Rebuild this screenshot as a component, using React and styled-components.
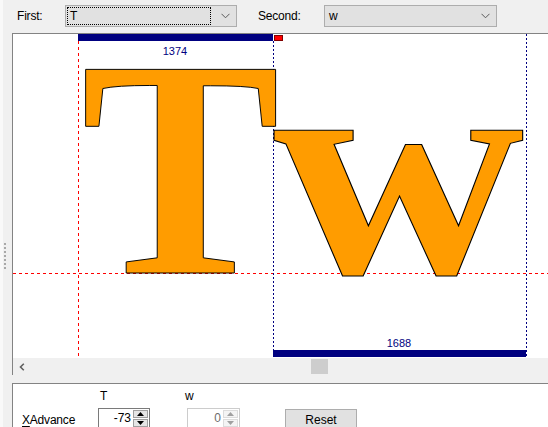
import React from 'react'
import styled, { createGlobalStyle } from 'styled-components'

const GlobalStyle = createGlobalStyle`
  html, body {
    margin: 0;
    padding: 0;
    background: #f0f0f0;
    font-family: "Liberation Sans", Arial, sans-serif;
    font-size: 12px;
    color: #000;
  }
`

const Window = styled.div`
  display: flex;
  width: 548px;
  height: 427px;
  overflow: hidden;
  background: #f0f0f0;
`

const Splitter = styled.div`
  width: 12px;
  flex-shrink: 0;
  box-sizing: border-box;
  border-left: 3px solid #f9f9f9;
  padding-top: 243px;
`

const Grip = styled.div`
  width: 2px;
  height: 27px;
  margin-left: 1px;
  background: repeating-linear-gradient(to bottom, #a8a8a8 0 2px, transparent 2px 4px);
`

const Main = styled.div`
  flex: 1;
  display: flex;
  flex-direction: column;
  min-width: 0;
`

const Toolbar = styled.div`
  height: 33px;
  flex-shrink: 0;
  display: flex;
  align-items: center;
  padding-left: 5px;
  padding-bottom: 1px;
  box-sizing: border-box;
`

const Label = styled.span`
  width: ${p => p.$w}px;
  margin-left: ${p => p.$ml || 0}px;
  letter-spacing: -0.2px;
`

const ComboBox = styled.div`
  display: flex;
  align-items: center;
  width: ${p => p.$w}px;
  height: 22px;
  box-sizing: border-box;
  border: 1px solid #adadad;
  background: #e1e1e1;
  padding: 0 6px 0 1px;
`

const ComboText = styled.div`
  flex: 1;
  height: 18px;
  line-height: 16px;
  box-sizing: border-box;
  border: 1px dotted ${p => (p.$focused ? '#000' : 'transparent')};
  padding-left: 2px;
  margin-right: 10px;
`

const CanvasFrame = styled.div`
  height: 342px;
  flex-shrink: 0;
  display: flex;
  flex-direction: column;
  box-sizing: border-box;
  border-top: 1px solid #838383;
  border-left: 1px solid #838383;
`

const Drawing = styled.div`
  height: 324px;
  flex-shrink: 0;
  background: #fff;
  overflow: hidden;
  svg {
    display: block;
  }
`

const HScroll = styled.div`
  height: 17px;
  flex-shrink: 0;
  display: flex;
  align-items: center;
  background: #f0f0f0;
`

const ScrollArrow = styled.div`
  width: 17px;
  height: 17px;
  display: flex;
  align-items: center;
  justify-content: center;
`

const Thumb = styled.div`
  width: 17px;
  height: 15px;
  margin-left: 281px;
  background: #cdcdcd;
`

const BottomPanel = styled.div`
  margin-top: 8px;
  flex: 1;
  min-height: 0;
  overflow: hidden;
  background: #fff;
  border-top: 1px solid #838383;
  border-left: 1px solid #838383;
  display: grid;
  grid-template-columns: 76px 89px 98px 72px;
  grid-template-rows: 14px 22px;
  row-gap: 5px;
  padding: 5px 0 0 9px;
  align-items: center;
`

const HeadCell = styled.div`
  margin-left: ${p => p.$ml}px;
  line-height: 14px;
`

const RowLabel = styled.div`
  padding-top: 2px;
  letter-spacing: -0.2px;
  u {
    text-decoration-thickness: 1px;
    text-underline-offset: 2px;
  }
`

const SpinBox = styled.div`
  display: flex;
  width: ${p => p.$w}px;
  height: 21px;
  box-sizing: border-box;
  border: 1px solid ${p => (p.$disabled ? '#cccccc' : '#7a7a7a')};
  background: #fff;
  align-self: start;
`

const SpinValue = styled.div`
  flex: 1;
  text-align: right;
  padding-right: 2px;
  line-height: 18px;
  color: ${p => (p.$disabled ? '#6d6d6d' : '#000')};
`

const SpinButtons = styled.div`
  width: 15px;
  display: flex;
  flex-direction: column;
  padding: 1px 1px 1px 0;
  gap: 1px;
`

const SpinButton = styled.div`
  flex: 1;
  border: 1px solid ${p => (p.$disabled ? '#dcdcdc' : '#a0a0a0')};
  background: ${p => (p.$disabled ? '#f4f4f4' : '#e5e5e5')};
  display: flex;
  align-items: center;
  justify-content: center;
`

const ResetButton = styled.div`
  width: 72px;
  height: 22px;
  box-sizing: border-box;
  border: 1px solid #adadad;
  background: #e1e1e1;
  text-align: center;
  line-height: 20px;
  align-self: start;
  margin-top: 1px;
`

const Chevron = () => (
  <svg width="9" height="6" viewBox="0 0 9 6">
    <path d="M0.5 0.8 L4.5 4.8 L8.5 0.8" fill="none" stroke="#5a5a5a" strokeWidth="1" />
  </svg>
)

const Triangle = ({ up, disabled }) => (
  <svg width="7" height="4" viewBox="0 0 7 4">
    <path d={up ? 'M0 4 L3.5 0 L7 4 Z' : 'M0 0 L3.5 4 L7 0 Z'} fill={disabled ? '#a0a0a0' : '#000'} />
  </svg>
)

const Spin = ({ value, disabled, w }) => (
  <SpinBox $disabled={disabled} $w={w}>
    <SpinValue $disabled={disabled}>{value}</SpinValue>
    <SpinButtons>
      <SpinButton $disabled={disabled}>
        <Triangle up disabled={disabled} />
      </SpinButton>
      <SpinButton $disabled={disabled}>
        <Triangle disabled={disabled} />
      </SpinButton>
    </SpinButtons>
  </SpinBox>
)

// kerning view: T origin at 65, w origin at 260, baseline at 239 (canvas coords)
const GLYPH = '#ff9c00'
const NAVY = '#000080'
const SERIF = '"Liberation Serif", "Times New Roman", serif'
const SANS = '"Liberation Sans", Arial, sans-serif'

const KernView = () => (
  <svg width="535" height="324" viewBox="0 0 535 324">
    <line x1="0" y1="239.5" x2="535" y2="239.5" stroke="#ff0000" strokeDasharray="3 3" />
    <line x1="65.5" y1="7" x2="65.5" y2="324" stroke="#ff0000" strokeDasharray="3 3" />
    <line x1="260.5" y1="7" x2="260.5" y2="316" stroke={NAVY} strokeDasharray="2 2" />
    <line x1="513.5" y1="0" x2="513.5" y2="324" stroke={NAVY} strokeDasharray="2 2" />

    <text
      x="68"
      y="239"
      fontFamily={SERIF}
      fontWeight="bold"
      fontSize="311"
      fill={GLYPH}
      stroke="#000"
      strokeWidth="1"
      transform="translate(68 239) scale(0.96 1) translate(-68 -239)"
    >
      T
    </text>
    <text
      x="260"
      y="239"
      fontFamily={SERIF}
      fontWeight="bold"
      fontSize="311"
      fill={GLYPH}
      stroke="#000"
      strokeWidth="1"
      transform="translate(260 239) scale(1.12 1) translate(-260 -239)"
    >
      w
    </text>

    <rect x="65" y="0" width="195" height="7" fill={NAVY} />
    <rect x="261.5" y="1.5" width="8" height="5" fill="#ff0000" stroke="#800000" />
    <text x="162" y="21" textAnchor="middle" fontFamily={SANS} fontSize="11" fill={NAVY}>
      1374
    </text>

    <rect x="260" y="316" width="253" height="7" fill={NAVY} />
    <text x="386" y="313" textAnchor="middle" fontFamily={SANS} fontSize="11" fill={NAVY}>
      1688
    </text>
  </svg>
)

export default function App() {
  return (
    <>
      <GlobalStyle />
      <Window>
        <Splitter>
          <Grip />
        </Splitter>
        <Main>
          <Toolbar>
            <Label $w={48}>First:</Label>
            <ComboBox $w={172}>
              <ComboText $focused>T</ComboText>
              <Chevron />
            </ComboBox>
            <Label $w={66} $ml={21}>Second:</Label>
            <ComboBox $w={173}>
              <ComboText>w</ComboText>
              <Chevron />
            </ComboBox>
          </Toolbar>

          <CanvasFrame>
            <Drawing>
              <KernView />
            </Drawing>
            <HScroll>
              <ScrollArrow>
                <svg width="6" height="8" viewBox="0 0 6 8">
                  <path d="M4.8 0.8 L1.5 4 L4.8 7.2" fill="none" stroke="#606060" strokeWidth="1.6" />
                </svg>
              </ScrollArrow>
              <Thumb />
            </HScroll>
          </CanvasFrame>

          <BottomPanel>
            <div />
            <HeadCell $ml={2}>T</HeadCell>
            <HeadCell $ml={-2}>w</HeadCell>
            <div />
            <RowLabel>
              <u>X</u>Advance
            </RowLabel>
            <Spin value="-73" w={52} />
            <Spin value="0" w={53} disabled />
            <ResetButton>Reset</ResetButton>
          </BottomPanel>
        </Main>
      </Window>
    </>
  )
}
